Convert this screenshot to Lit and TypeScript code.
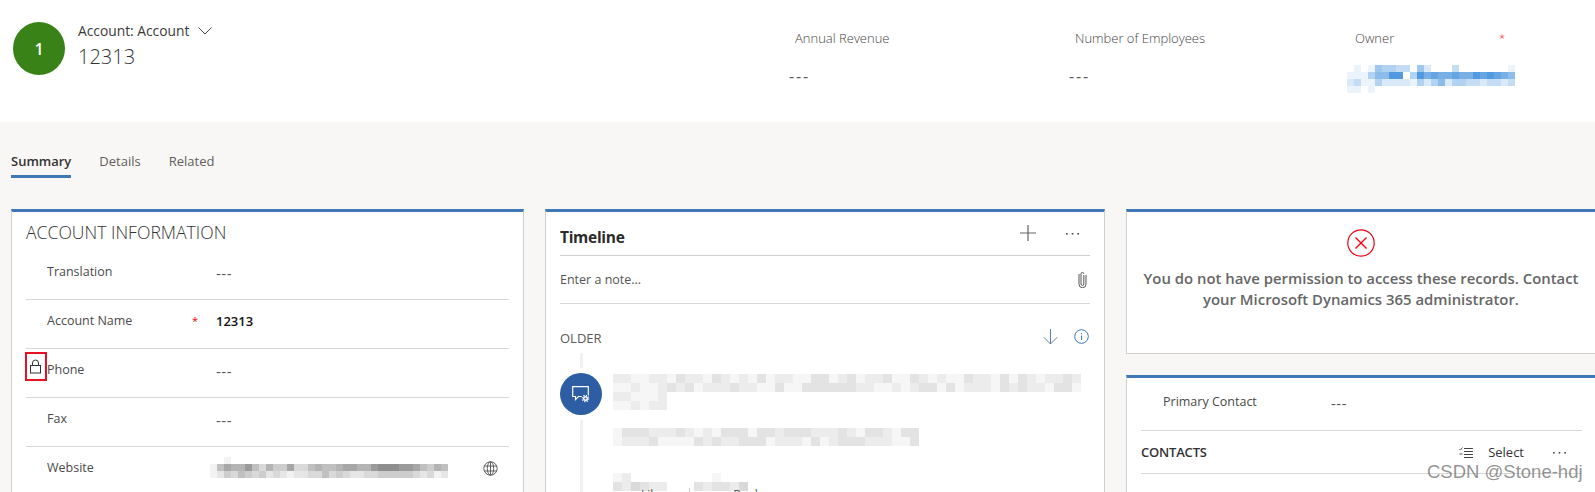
import { LitElement, html, css, svg } from "lit";
import { customElement } from "lit/decorators.js";

function seeded(seed: number) {
  let s = seed;
  return () => {
    s = (s * 9301 + 49297) % 233280;
    return s / 233280;
  };
}

function mosaic(cell: number, rows: string[], rgb: string, scale = 0.1) {
  const cols = Math.max(...rows.map((r) => r.length));
  return html`<svg class="mosaic" width=${cols * cell} height=${rows.length * cell} shape-rendering="crispEdges">
    ${rows.map((r, y) =>
      [...r].map((c, x) =>
        c === "." ? null : svg`<rect x=${x * cell} y=${y * cell} width=${cell} height=${cell} fill=${rgb} fill-opacity=${Number(c) * scale}></rect>`
      )
    )}
  </svg>`;
}

function noise(seed: number, cols: number, rows: number, lo: number, hi: number) {
  const r = seeded(seed);
  return Array.from({ length: rows }, () =>
    Array.from({ length: cols }, () => String(Math.floor(lo + r() * (hi - lo + 1)))).join("")
  );
}

const OWNER = [
  ".1.1544330520..3.......1",
  "111466990497877877989876",
  "231142222142462443323323",
  "11.1....................",
];
const WEBSITE = [
  "..1...............................",
  "1576685364473356556776689998875465",
  "1243543423212233534322334444432312",
];

const I = {
  chevron: html`<svg width="14" height="8" viewBox="0 0 14 8" fill="none" stroke="#444" stroke-width="1"><path d="M.5.5 7 7 13.5.5"/></svg>`,
  lock: html`<svg width="12" height="15" viewBox="0 0 12 15" fill="none" stroke="#333" stroke-width="1"><rect x=".5" y="6.5" width="10" height="7.5"/><path d="M2.5 6.500V4a3 3 0 0 1 6 0v2.500"/></svg>`,
  globe: html`<svg width="15" height="15" viewBox="0 0 15 15" fill="none" stroke="#606060" stroke-width="1"><circle cx="7.5" cy="7.5" r="6.7"/><ellipse cx="7.5" cy="7.5" rx="3.2" ry="6.7"/><path d="M1.2 5h12.6M1.2 10h12.6M7.5.8v13.4"/></svg>`,
  plus: html`<svg width="16" height="16" viewBox="0 0 16 16" stroke="#666" stroke-width="1.2"><path d="M0 8h16M8 0v16"/></svg>`,
  dots: html`<svg width="15" height="3" viewBox="0 0 15 3" fill="#444"><rect x="1" y="1" width="1.6" height="1.6"/><rect x="6.7" y="1" width="1.6" height="1.6"/><rect x="12.4" y="1" width="1.6" height="1.6"/></svg>`,
  clip: html`<svg width="9" height="17" viewBox="0 0 9 17" fill="none" stroke="#555" stroke-width="1"><path d="M5.800 4v9a1.400 1.400 0 0 1-2.800 0V2.800a1.400 1.400 0 0 1 2.800 0"/><path d="M8 4v9.200a3.500 3.500 0 0 1-7 0V3"/></svg>`,
  arrow: html`<svg width="15" height="16" viewBox="0 0 15 16" fill="none" stroke="#5f7d9c" stroke-width="1"><path d="M7.5 0v15M.7 8.200l6.800 6.800 6.800-6.800"/></svg>`,
  info: html`<svg width="15" height="15" viewBox="0 0 15 15" fill="none" stroke="#3a78c2" stroke-width="1"><circle cx="7.5" cy="7.5" r="6.8"/><path d="M7.5 6.500V11M7.500 4v1.200"/></svg>`,
  chat: html`<svg width="18" height="17" viewBox="0 0 18 17" fill="none"><path d="M.7.7h15.600v9.800H6.500L3.500 13.500v-3H.7z" stroke="#fff" stroke-width="1.200"/><circle cx="13.500" cy="12.500" r="4.200" fill="#2d5da3"/><circle cx="13.500" cy="12.500" r="1.800" stroke="#fff" stroke-width="1.400"/><circle cx="13.500" cy="12.500" r="3.200" stroke="#fff" stroke-width="1.200" stroke-dasharray="1.200 1.300"/></svg>`,
  error: html`<svg width="28" height="28" viewBox="0 0 28 28" fill="none" stroke="#f00010" stroke-width="1.200"><circle cx="14" cy="14" r="13.200"/><path d="M8.500 8.500l11 11M19.500 8.500l-11 11" stroke-width="1.400"/></svg>`,
  list: html`<svg width="14" height="11" viewBox="0 0 14 11" fill="none" stroke="#444" stroke-width="1"><path d="M5 1.500h9M5 4.500h9M5 7.500h9M5 10.500h9"/><path d="M.5 2l1 1 2-2.500M.5 7h3" stroke-width=".9"/></svg>`,
  like: html`<svg width="13" height="6" viewBox="0 0 13 6" fill="none" stroke="#555"><path d="M1 .5c3 4 8 4 11 0"/></svg>`,
  reply: html`<svg width="13" height="6" viewBox="0 0 13 6" fill="none" stroke="#555"><path d="M11 .5 6 5"/></svg>`,
};

@customElement("app-root")
export class AppRoot extends LitElement {
  static styles = css`
    :host {
      display: block;
      width: 100%;
      height: 492px;
      overflow: hidden;
      position: relative;
      background: #f8f7f5;
      font-family: "Open Sans", "Noto Sans", sans-serif;
      color: #333;
    }
    svg { display: block; flex: none; }
    .header {
      height: 122px;
      background: #fff;
      display: grid;
      grid-template-columns: 789px 280px 278px 1fr;
    }
    .identity {
      display: flex;
      align-items: flex-start;
      gap: 13px;
      padding: 22px 0 0 13px;
    }
    .avatar {
      width: 52px;
      height: 53px;
      border-radius: 50%;
      background: #388217;
      color: #fff;
      font-size: 16px;
      font-weight: 600;
      display: flex;
      align-items: center;
      justify-content: center;
    }
    .entity {
      display: flex;
      align-items: center;
      gap: 9px;
      font-size: 13.8px;
      line-height: 18px;
      color: #3a3a3a;
    }
    .name {
      font-size: 20px;
      font-weight: 300;
      line-height: 28px;
      color: #333;
      margin-top: 3px;
    }
    .field { padding-top: 29px; }
    .field-label {
      font-size: 13px;
      font-weight: 300;
      line-height: 18px;
      color: #444;
      padding-left: 6px;
    }
    .field-value {
      font-size: 16px;
      letter-spacing: 1.8px;
      line-height: 18px;
      margin-top: 20px;
      color: #555;
    }
    .field.owner .field-label {
      display: flex;
      justify-content: space-between;
      width: 150px;
      padding-left: 8px;
    }
    .owner .blob { margin-top: 18px; }
    .star { color: #e00; font-size: 11px; }
    .tabs {
      display: flex;
      gap: 28px;
      height: 87px;
      padding: 30px 0 0 11px;
      box-sizing: border-box;
    }
    .tab {
      font-size: 13px;
      line-height: 18px;
      color: #605e5c;
      height: 26px;
      box-sizing: border-box;
    }
    .tab.active {
      color: #333;
      font-weight: 600;
      border-bottom: 3px solid #3f78b6;
    }
    .board {
      display: grid;
      grid-template-columns: 513px 560px 1fr;
      gap: 21px;
      padding-left: 11px;
      align-items: start;
    }
    .card {
      background: #fff;
      border: 1px solid #cfcfcf;
      border-top: 3px solid #3f78b6;
      box-sizing: border-box;
    }
    .info-card { height: 300px; padding: 0 14px; }
    .info-title {
      font-size: 17.6px;
      font-weight: 300;
      line-height: 24px;
      padding-top: 8px;
      height: 39px;
      box-sizing: border-box;
      color: #333;
    }
    .row {
      display: grid;
      grid-template-columns: 21px 145px 24px 1fr auto;
      height: 49px;
      box-sizing: border-box;
      border-bottom: 1px solid #d8d8d8;
      align-items: start;
      padding-right: 11px;
    }
    .row:last-child { border-bottom: none; }
    .row-label { line-height: 18px; padding-top: 12px; color: #4a4a4a; font-size: 12.5px; }
    .row-star { line-height: 18px; padding-top: 10px; }
    .row-value { line-height: 18px; padding-top: 13px; color: #555; font-size: 15px; letter-spacing: 0.5px; }
    .row-value.strong { color: #111; font-weight: 600; font-size: 13px; letter-spacing: 0; padding-top: 12px; }
    .lockbox {
      box-sizing: border-box;
      width: 22px;
      height: 29px;
      margin: 3px 0 0 -1px;
      border: 2px solid #e81123;
      display: flex;
      align-items: center;
      justify-content: center;
    }
    .web-blob { padding-top: 10px; margin-left: -6px; }
    .globe { padding-top: 14px; }
    .timeline-card { height: 300px; padding: 0 14px; overflow: hidden; }
    .tl-head {
      display: flex;
      align-items: center;
      height: 43px;
      border-bottom: 1px solid #cfcfcf;
      padding-right: 10px;
    }
    .tl-title { font-size: 15.5px; font-weight: 700; color: #2b2b2b; flex: 1; letter-spacing: -0.3px; padding-top: 6px; }
    .tl-actions { display: flex; align-items: center; gap: 29px; margin-top: -1px; }
    .note {
      height: 48px;
      box-sizing: border-box;
      display: flex;
      align-items: center;
      justify-content: space-between;
      border-bottom: 1px solid #d8d8d8;
      font-size: 12.5px;
      color: #555;
      padding-right: 3px;
    }
    .older {
      display: flex;
      align-items: center;
      height: 49px;
      padding-top: 19px;
      box-sizing: border-box;
      font-size: 13px;
      color: #5a5a5a;
    }
    .older span { flex: 1; }
    .older-icons { display: flex; gap: 16px; padding-right: 1px; margin-top: -2px; }
    .entry {
      display: grid;
      grid-template-columns: 42px 1fr;
      column-gap: 11px;
    }
    .rail {
      display: flex;
      flex-direction: column;
      align-items: center;
      gap: 5px;
    }
    .rail-line { width: 3px; background: #f0f0f0; }
    .rail-line.top { height: 15px; }
    .rail-line.bottom { height: 90px; }
    .bubble {
      width: 42px;
      height: 42px;
      border-radius: 50%;
      background: #2d5da3;
      display: flex;
      align-items: center;
      justify-content: center;
    }
    .post { padding-top: 21px; display: flex; flex-direction: column; }
    .post .gap1 { height: 18px; }
    .post .gap2 { height: 27px; }
    .actions { display: flex; gap: 27px; position: relative; }
    .peek {
      position: absolute;
      top: 14px;
      left: 5px;
      display: flex;
      align-items: center;
      gap: 10px;
      font-size: 12px;
      line-height: 16px;
      color: #555;
    }
    .peek .sep { width: 1px; height: 14px; background: #ccc; margin: 0 10px 0 16px; }
    .right-col { display: flex; flex-direction: column; gap: 21px; }
    .denied {
      height: 145px;
      border-right: none;
      display: flex;
      flex-direction: column;
      align-items: center;
      padding-top: 17px;
    }
    .denied-text {
      font-size: 14.9px;
      font-weight: 600;
      line-height: 21px;
      color: #666;
      text-align: center;
      margin-top: 11px;
      width: 445px;
    }
    .contacts { height: 200px; border-right: none; padding: 0 13px 0 14px; }
    .contact-row {
      display: grid;
      grid-template-columns: 168px 1fr;
      height: 53px;
      box-sizing: border-box;
      border-bottom: 1px solid #d8d8d8;
      padding: 15px 0 0 22px;
      font-size: 12.5px;
      line-height: 18px;
      color: #4a4a4a;
    }
    .contact-row .val { font-size: 15px; letter-spacing: 0.5px; padding-top: 1px; color: #555; }
    .sub-head {
      display: flex;
      align-items: center;
      height: 43px;
      border-bottom: 1px solid #d8d8d8;
      font-size: 13px;
      padding-right: 15px;
      box-sizing: border-box;
    }
    .sub-title { flex: 1; font-weight: 600; color: #333; letter-spacing: -0.2px; }
    .sub-select { font-size: 13px; margin: 0 28px 0 15px; color: #333; }
    .watermark {
      position: absolute;
      left: 1427px;
      top: 461px;
      font-family: "Liberation Sans", Arial, sans-serif;
      font-size: 18.5px;
      line-height: 22px;
      color: rgba(100, 100, 100, 0.7);
      white-space: nowrap;
    }
  `;

  private row(label: string, value: unknown, opts: { star?: boolean; lock?: boolean; strong?: boolean } = {}) {
    return html`<div class="row">
      <div>${opts.lock ? html`<div class="lockbox">${I.lock}</div>` : null}</div>
      <div class="row-label">${label}</div>
      <div class="row-star">${opts.star ? html`<span class="star">*</span>` : null}</div>
      <div class="row-value ${opts.strong ? "strong" : ""}">${value}</div>
      <div class="globe"></div>
    </div>`;
  }

  render() {
    return html`
      <header class="header">
        <div class="identity">
          <div class="avatar">1</div>
          <div>
            <div class="entity">Account: Account ${I.chevron}</div>
            <div class="name">12313</div>
          </div>
        </div>
        <div class="field"><div class="field-label">Annual Revenue</div><div class="field-value">---</div></div>
        <div class="field"><div class="field-label">Number of Employees</div><div class="field-value">---</div></div>
        <div class="field owner">
          <div class="field-label"><span>Owner</span><span class="star">*</span></div>
          <div class="blob">${mosaic(7, OWNER, "#3f8fdc")}</div>
        </div>
      </header>
      <nav class="tabs">
        <div class="tab active">Summary</div>
        <div class="tab">Details</div>
        <div class="tab">Related</div>
      </nav>
      <main class="board">
        <section class="card info-card">
          <div class="info-title">ACCOUNT INFORMATION</div>
          ${this.row("Translation", "---")}
          ${this.row("Account Name", "12313", { star: true, strong: true })}
          ${this.row("Phone", "---", { lock: true })}
          ${this.row("Fax", "---")}
          <div class="row">
            <div></div>
            <div class="row-label">Website</div>
            <div></div>
            <div class="web-blob">${mosaic(7, WEBSITE, "#6b6b6b", 0.085)}</div>
            <div class="globe">${I.globe}</div>
          </div>
        </section>
        <section class="card timeline-card">
          <div class="tl-head">
            <div class="tl-title">Timeline</div>
            <div class="tl-actions">${I.plus}${I.dots}</div>
          </div>
          <div class="note"><span>Enter a note...</span>${I.clip}</div>
          <div class="older">
            <span>OLDER</span>
            <div class="older-icons">${I.arrow}${I.info}</div>
          </div>
          <div class="entry">
            <div class="rail">
              <div class="rail-line top"></div>
              <div class="bubble">${I.chat}</div>
              <div class="rail-line bottom"></div>
            </div>
            <div class="post">
              ${mosaic(9, [...noise(7, 52, 2, 1, 3), ...noise(11, 6, 2, 1, 2)], "#7a7a7a", 0.07)}
              <div class="gap1"></div>
              ${mosaic(9, noise(23, 34, 2, 1, 3), "#7a7a7a", 0.07)}
              <div class="gap2"></div>
              <div class="actions">
                <div class="peek">${I.like}<span>Like</span><span class="sep"></span>${I.reply}<span>Reply</span></div>
                ${mosaic(9, ["12....", "324322"], "#8a8a8a", 0.08)}
                ${mosaic(9, ["..1...", "323324"], "#8a8a8a", 0.08)}
              </div>
            </div>
          </div>
        </section>
        <div class="right-col">
          <section class="card denied">
            ${I.error}
            <div class="denied-text">You do not have permission to access these records. Contact your Microsoft Dynamics 365 administrator.</div>
          </section>
          <section class="card contacts">
            <div class="contact-row"><div>Primary Contact</div><div class="val">---</div></div>
            <div class="sub-head">
              <div class="sub-title">CONTACTS</div>
              ${I.list}
              <div class="sub-select">Select</div>
              ${I.dots}
            </div>
          </section>
        </div>
      </main>
      <div class="watermark">CSDN @Stone-hdj</div>
    `;
  }
}
